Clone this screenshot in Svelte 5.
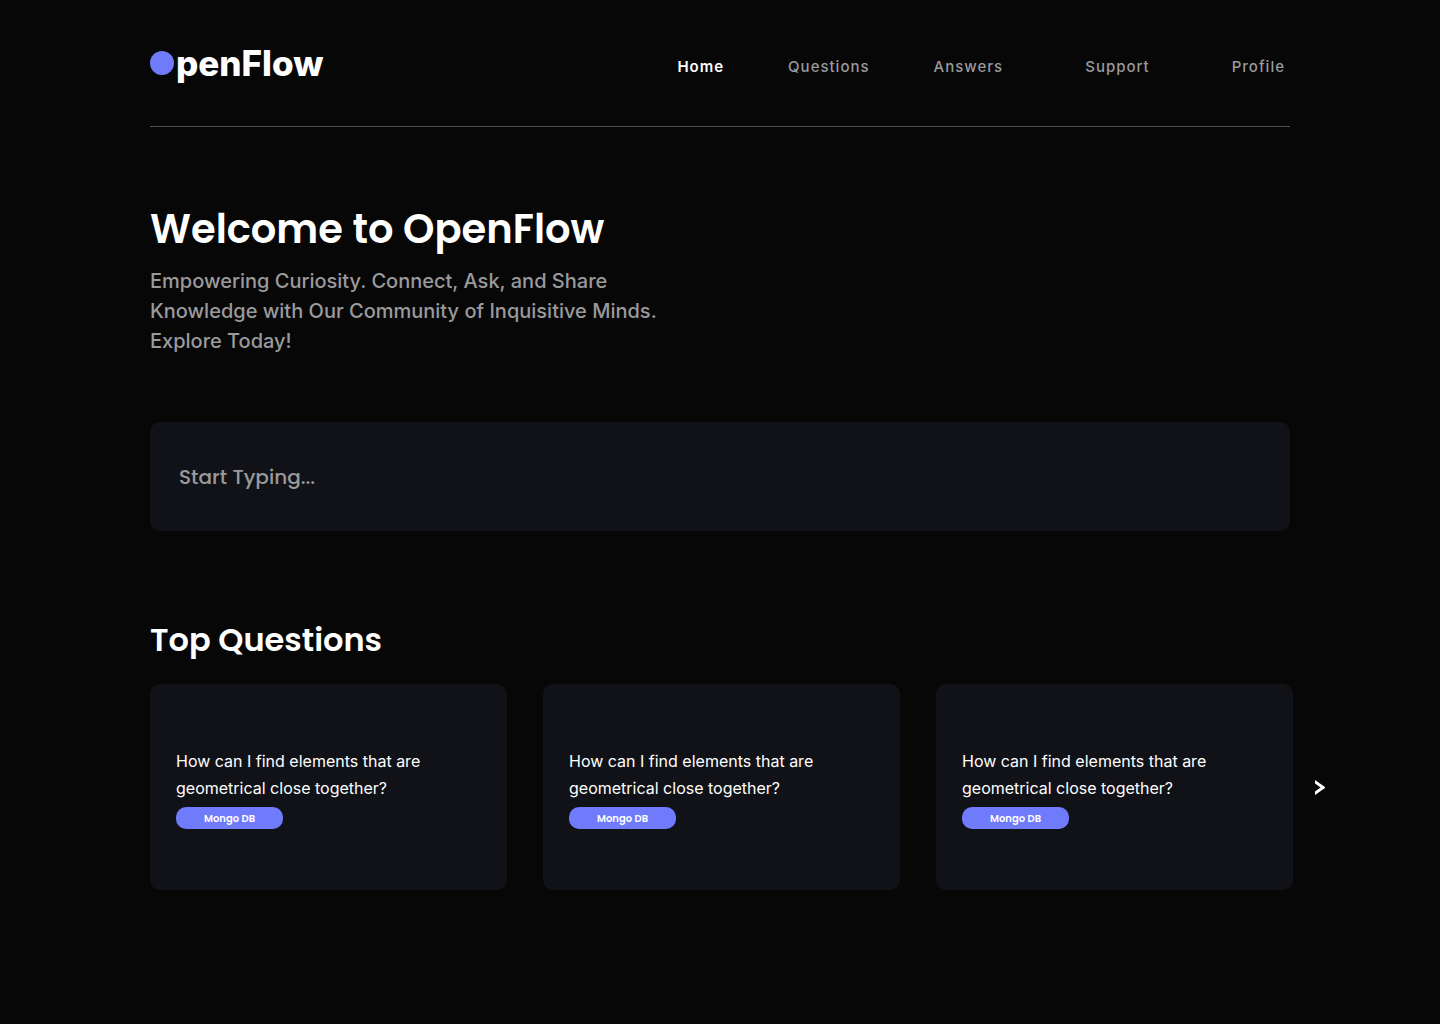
<script>
  const links = [
    { label: 'Home', active: true },
    { label: 'Questions' },
    { label: 'Answers' },
    { label: 'Support', wide: true },
    { label: 'Profile', wide: true }
  ];

  const questions = [1, 2, 3].map((id) => ({
    id,
    text: 'How can I find elements that are geometrical close together?',
    tag: 'Mongo DB'
  }));

  let query = $state('');
</script>

<div class="page">
  <header>
    <a class="logo" href="#home" aria-label="OpenFlow">
      <svg class="dot" viewBox="0 0 24 24" aria-hidden="true"><circle cx="12" cy="12" r="12" /></svg>
      <span>penFlow</span>
    </a>
    <nav aria-label="Main">
      {#each links as link}
        <a href={'#' + link.label.toLowerCase()} class:active={link.active} class:wide={link.wide}>{link.label}</a>
      {/each}
    </nav>
  </header>

  <main>
    <section class="hero">
      <h1>Welcome to OpenFlow</h1>
      <p>
        Empowering Curiosity. Connect, Ask, and Share Knowledge with Our Community of Inquisitive
        Minds. Explore Today!
      </p>
    </section>

    <input class="search" type="text" aria-label="Ask a question" placeholder="Start Typing..." bind:value={query} />

    <section class="top">
      <h2>Top Questions</h2>
      <div class="carousel">
        <div class="cards">
          {#each questions as question (question.id)}
            <article>
              <p>{question.text}</p>
              <a class="tag" href="#mongo-db">{question.tag}</a>
            </article>
          {/each}
        </div>
        <button class="next" type="button" aria-label="Next questions">
          <svg viewBox="0 0 11 16" aria-hidden="true"><path d="M1 1 11 8V9L1 16V12.500L6.500 8.500 1 4.500Z" /></svg>
        </button>
      </div>
    </section>
  </main>
</div>

<style>
  :global(body) {
    margin: 0;
    background: #070707;
  }

  .page {
    min-height: 100vh;
    box-sizing: border-box;
    padding: 0 150px 134px;
    color: #fff;
    font-family: Inter, sans-serif;
  }

  a {
    color: inherit;
    text-decoration: none;
  }

  header {
    display: flex;
    align-items: center;
    justify-content: space-between;
    padding: 40px 5px 40px 0;
    border-bottom: 1px solid #4f4f4f;
  }

  .logo {
    display: flex;
    align-items: center;
    gap: 2px;
    font: 800 35px/46px Inter, sans-serif;
  }

  .dot {
    width: 24px;
    height: 24px;
    fill: #707bfb;
  }

  nav {
    display: flex;
    gap: 64px;
    padding-top: 8px;
    color: #9a9a9c;
    font-size: 15px;
    font-weight: 500;
    line-height: 18px;
    letter-spacing: 1px;
  }

  .wide {
    margin-left: 18px;
  }

  .active {
    color: #fff;
    font-weight: 600;
  }

  .hero {
    padding-top: 72px;
  }

  h1,
  h2,
  p {
    margin: 0;
  }

  h1 {
    font: 600 40px/60px Poppins, Inter, sans-serif;
  }

  .hero p {
    max-width: 520px;
    margin-top: 7px;
    color: #9a9a9c;
    font-size: 20px;
    font-weight: 500;
    line-height: 30px;
  }

  .search {
    display: block;
    width: 100%;
    height: 109px;
    box-sizing: border-box;
    margin-top: 66px;
    padding: 0 29px;
    border: 0;
    border-radius: 10px;
    background: #111217;
    color: #fff;
    font: 500 20px/30px Poppins, Inter, sans-serif;
  }

  .search::placeholder {
    color: #9a9a9c;
    opacity: 1;
  }

  .top {
    padding-top: 85px;
  }

  h2 {
    font: 600 32px/48px Poppins, Inter, sans-serif;
  }

  .carousel {
    display: flex;
    align-items: center;
    gap: 21px;
    margin: 20px -35px 0 0;
  }

  .cards {
    flex: 1;
    display: grid;
    grid-template-columns: repeat(3, 1fr);
    gap: 36px;
  }

  article {
    display: flex;
    flex-direction: column;
    align-items: flex-start;
    gap: 5px;
    padding: 64px 26px 61px;
    border-radius: 10px;
    background: #111217;
  }

  article p {
    max-width: 270px;
    font-size: 16px;
    line-height: 27px;
  }

  .tag {
    min-width: 107px;
    padding-top: 2px;
    border-radius: 10px;
    background: #707bfb;
    font: 600 10px/20px Poppins, Inter, sans-serif;
    text-align: center;
  }

  .next {
    width: 11px;
    height: 16px;
    padding: 0;
    border: 0;
    background: none;
    cursor: pointer;
  }

  .next svg {
    display: block;
    fill: #fff;
  }
</style>
